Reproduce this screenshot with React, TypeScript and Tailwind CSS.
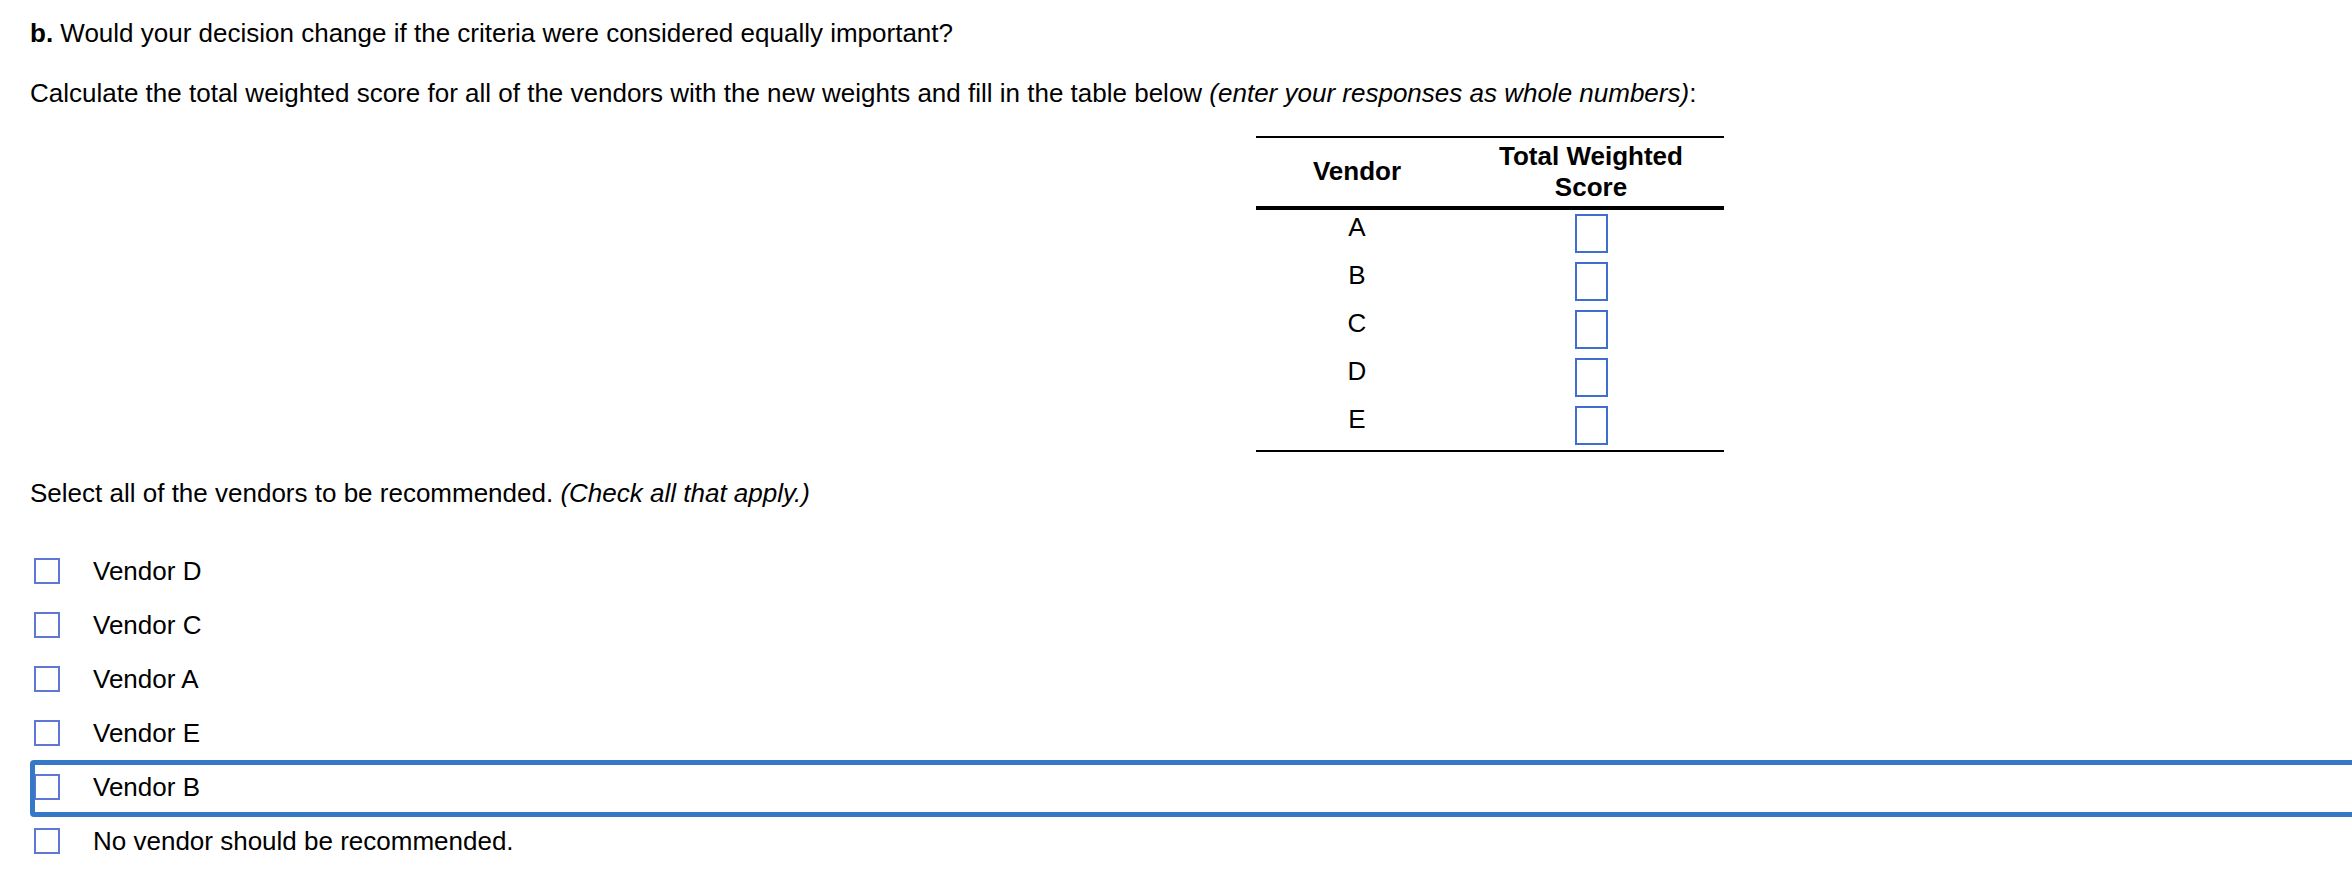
const vendors = ["A", "B", "C", "D", "E"];

const choices = ["Vendor D", "Vendor C", "Vendor A", "Vendor E", "Vendor B", "No vendor should be recommended."];

function CheckRow({ label, focused }: { label: string; focused?: boolean }) {
  return (
    <div className="relative flex h-[54px] items-center">
      {focused && (
        <div className="pointer-events-none absolute top-0 bottom-[-3px] left-0 right-[-40px] rounded-[4px] border-[5px] border-[#3578c6]" />
      )}
      <span className="ml-[4px] h-[26px] w-[26px] shrink-0 border-2 border-[#5f77d6] bg-white" />
      <span className="ml-[33px] leading-[30px]">{label}</span>
    </div>
  );
}

export default function App() {
  return (
    <div className="min-h-[888px] w-full overflow-hidden bg-white pt-[18px] pl-[30px] font-['Liberation_Sans',Arial,sans-serif] text-[26px] text-black">
      <p className="leading-[30px]">
        <b>b.</b> Would your decision change if the criteria were considered equally important?
      </p>
      <p className="mt-[30px] leading-[30px]">
        Calculate the total weighted score for all of the vendors with the new weights and fill in the table below{" "}
        <i>(enter your responses as whole numbers)</i>:
      </p>

      <div className="mt-[28px] ml-[1226px] w-[468px]">
        <div className="grid h-[74px] grid-cols-[202px_266px] border-t-2 border-b-4 border-black font-bold">
          <div className="flex items-center justify-center pb-[2px] leading-[31px]">Vendor</div>
          <div className="flex items-center justify-center text-center leading-[31px]">
            Total Weighted
            <br />
            Score
          </div>
        </div>
        <div className="border-b-2 border-black">
          {vendors.map((v) => (
            <div key={v} className="grid h-[48px] grid-cols-[202px_266px]">
              <div className="pt-[4px] text-center leading-[26px]">{v}</div>
              <div className="flex justify-center pt-[4px]">
                <input
                  type="text"
                  aria-label={`Total weighted score for vendor ${v}`}
                  className="h-[39px] w-[33px] border-2 border-[#3d6fd0] bg-white px-1 outline-none"
                />
              </div>
            </div>
          ))}
        </div>
      </div>

      <p className="mt-[26px] leading-[30px]">
        Select all of the vendors to be recommended. <i>(Check all that apply.)</i>
      </p>

      <div className="mt-[36px]">
        {choices.map((c) => (
          <CheckRow key={c} label={c} focused={c === "Vendor B"} />
        ))}
      </div>
    </div>
  );
}
